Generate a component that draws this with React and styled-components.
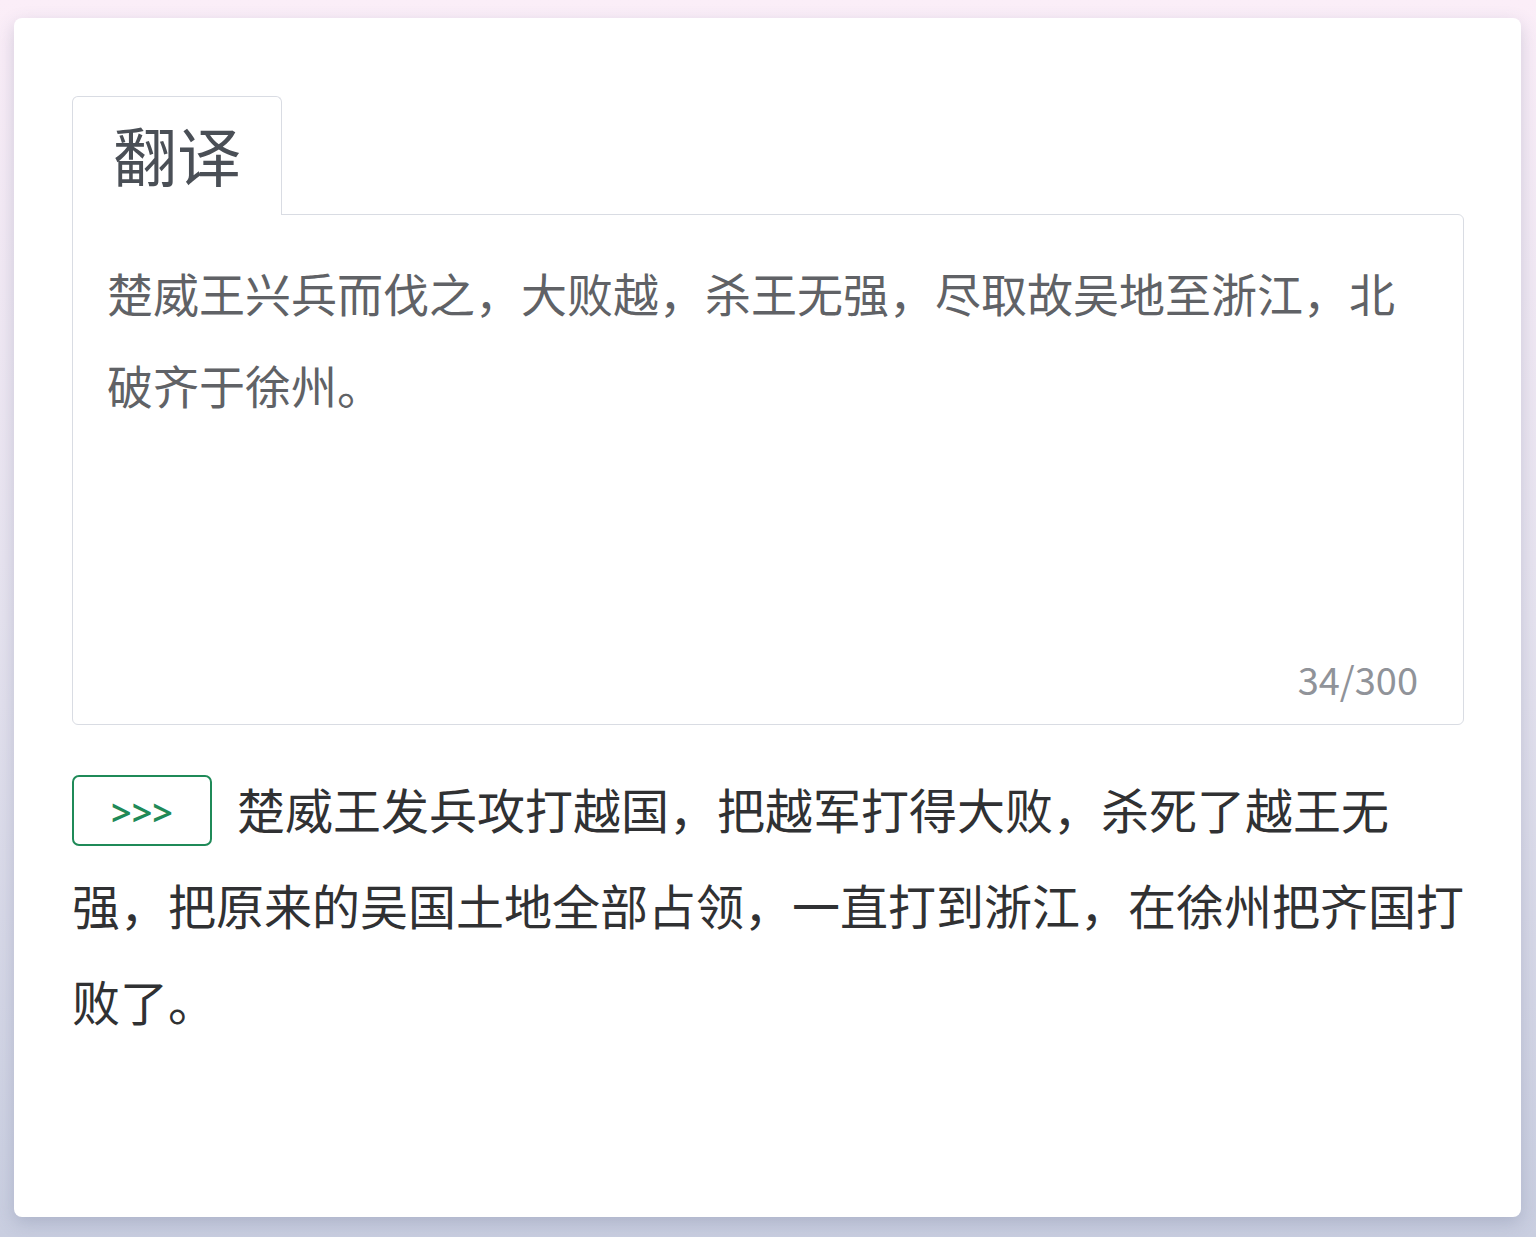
import React from "react";
import styled, { createGlobalStyle } from "styled-components";

const Global = createGlobalStyle`
  html, body { margin: 0; padding: 0; }
  body {
    min-height: 100vh;
    background: linear-gradient(180deg, #fbeef8 0%, #e6e3ef 50%, #c9cee0 100%);
    font-family: "Noto Sans CJK SC", "Noto Sans", sans-serif;
  }
  * { box-sizing: border-box; }
`;

const Page = styled.div`
  padding: 18px 15px 20px 14px;
  min-height: 100vh;
  display: flex;
  flex-direction: column;
`;

const Card = styled.div`
  flex: 1;
  background: #ffffff;
  border-radius: 8px;
  box-shadow: 0 6px 18px rgba(70, 80, 120, 0.22);
  padding: 78px 57px 40px 58px;
`;

const Tabs = styled.div`
  display: flex;
`;

const Tab = styled.div`
  position: relative;
  z-index: 1;
  margin-bottom: -1px;
  height: 119px;
  padding: 0 40px 7px;
  display: flex;
  align-items: center;
  border: 1px solid #d9dce3;
  border-bottom: none;
  border-radius: 6px 6px 0 0;
  background: #fff;
  font-size: 64px;
  line-height: 1;
  color: #4a4f56;
`;

const Editor = styled.div`
  position: relative;
  height: 511px;
  border: 1px solid #d9dce3;
  border-radius: 0 6px 6px 6px;
  padding: 36px 34px;
`;

const Source = styled.div`
  font-size: 46px;
  line-height: 92px;
  color: #606266;
  margin-top: -5px;
`;

const Counter = styled.span`
  position: absolute;
  right: 45px;
  bottom: 26px;
  font-size: 38px;
  line-height: 1;
  color: #909399;
`;

const Result = styled.div`
  margin-top: 35px;
  font-size: 48px;
  line-height: 96px;
  color: #303133;
`;

const Arrow = styled.button`
  display: inline-flex;
  align-items: center;
  justify-content: center;
  vertical-align: middle;
  width: 140px;
  height: 71px;
  margin: -10px 25px 0 0;
  border: 2px solid #1f8a58;
  border-radius: 7px;
  background: #fff;
  color: #1f8a58;
  font-family: "Noto Sans", sans-serif;
  font-size: 36px;
  font-weight: 600;
  letter-spacing: 0;
  padding: 4px 0 0;
`;

export default function App() {
  const source = "楚威王兴兵而伐之，大败越，杀王无强，尽取故吴地至浙江，北破齐于徐州。";
  return (
    <>
      <Global />
      <Page>
        <Card>
          <Tabs>
            <Tab>翻译</Tab>
          </Tabs>
          <Editor>
            <Source>{source}</Source>
            <Counter>{source.length}/300</Counter>
          </Editor>
          <Result>
            <Arrow>&gt;&gt;&gt;</Arrow>
            楚威王发兵攻打越国，把越军打得大败，杀死了越王无强，把原来的吴国土地全部占领，一直打到浙江，在徐州把齐国打败了。
          </Result>
        </Card>
      </Page>
    </>
  );
}
